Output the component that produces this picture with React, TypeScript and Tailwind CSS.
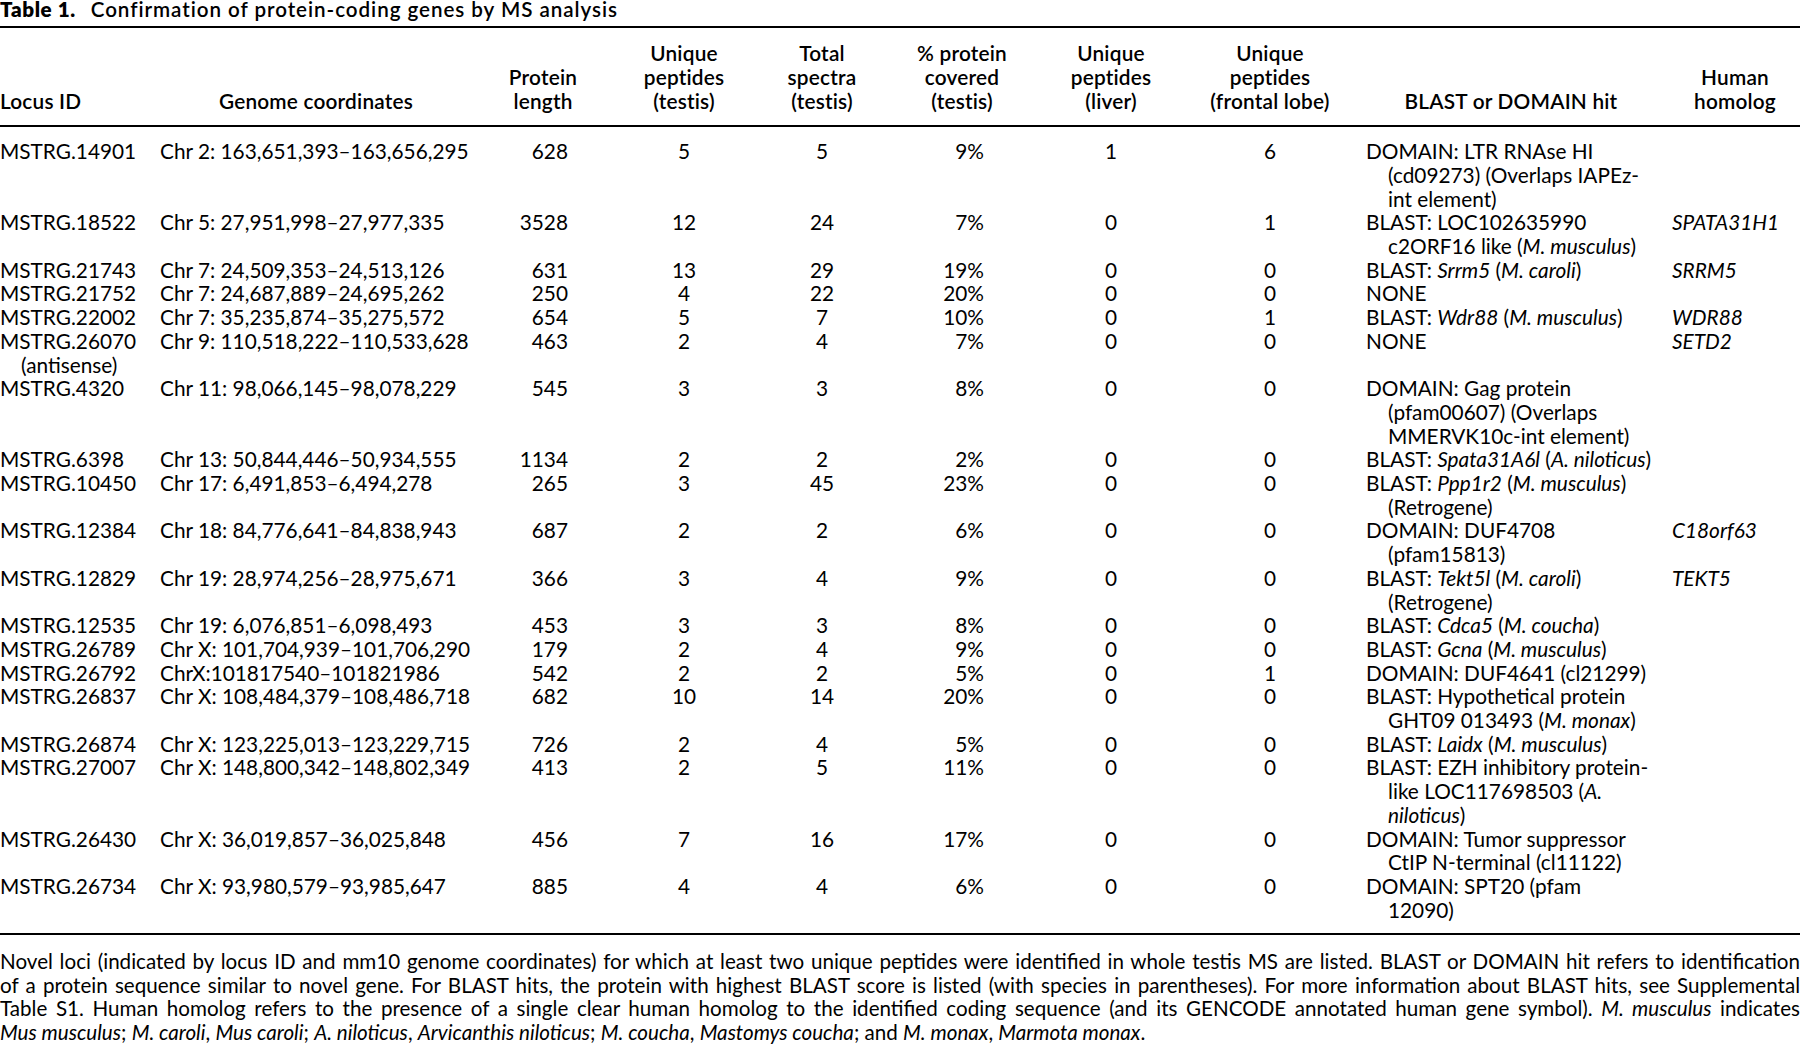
import React from "react";

const I = ({ children }: { children: React.ReactNode }) => <span className="italic">{children}</span>;

type Row = {
  id: React.ReactNode[];
  coord: string;
  len: string;
  up: string;
  ts: string;
  pc: string;
  liver: string;
  fl: string;
  hit: React.ReactNode[];
  hom?: React.ReactNode;
};

const rows: Row[] = [
  { id: ["MSTRG.14901"], coord: "Chr 2: 163,651,393–163,656,295", len: "628", up: "5", ts: "5", pc: "9%", liver: "1", fl: "6", hit: ["DOMAIN: LTR RNAse HI", "(cd09273) (Overlaps IAPEz-", "int element)"] },
  { id: ["MSTRG.18522"], coord: "Chr 5: 27,951,998–27,977,335", len: "3528", up: "12", ts: "24", pc: "7%", liver: "0", fl: "1", hit: ["BLAST: LOC102635990", <>c2ORF16 like (<I>M. musculus</I>)</>], hom: "SPATA31H1" },
  { id: ["MSTRG.21743"], coord: "Chr 7: 24,509,353–24,513,126", len: "631", up: "13", ts: "29", pc: "19%", liver: "0", fl: "0", hit: [<>BLAST: <I>Srrm5</I> (<I>M. caroli</I>)</>], hom: "SRRM5" },
  { id: ["MSTRG.21752"], coord: "Chr 7: 24,687,889–24,695,262", len: "250", up: "4", ts: "22", pc: "20%", liver: "0", fl: "0", hit: ["NONE"] },
  { id: ["MSTRG.22002"], coord: "Chr 7: 35,235,874–35,275,572", len: "654", up: "5", ts: "7", pc: "10%", liver: "0", fl: "1", hit: [<>BLAST: <I>Wdr88</I> (<I>M. musculus</I>)</>], hom: "WDR88" },
  { id: ["MSTRG.26070", "(antisense)"], coord: "Chr 9: 110,518,222–110,533,628", len: "463", up: "2", ts: "4", pc: "7%", liver: "0", fl: "0", hit: ["NONE"], hom: "SETD2" },
  { id: ["MSTRG.4320"], coord: "Chr 11: 98,066,145–98,078,229", len: "545", up: "3", ts: "3", pc: "8%", liver: "0", fl: "0", hit: ["DOMAIN: Gag protein", "(pfam00607) (Overlaps", "MMERVK10c-int element)"] },
  { id: ["MSTRG.6398"], coord: "Chr 13: 50,844,446–50,934,555", len: "1134", up: "2", ts: "2", pc: "2%", liver: "0", fl: "0", hit: [<>BLAST: <I>Spata31A6l</I> (<I>A. niloticus</I>)</>] },
  { id: ["MSTRG.10450"], coord: "Chr 17: 6,491,853–6,494,278", len: "265", up: "3", ts: "45", pc: "23%", liver: "0", fl: "0", hit: [<>BLAST: <I>Ppp1r2</I> (<I>M. musculus</I>)</>, "(Retrogene)"] },
  { id: ["MSTRG.12384"], coord: "Chr 18: 84,776,641–84,838,943", len: "687", up: "2", ts: "2", pc: "6%", liver: "0", fl: "0", hit: ["DOMAIN: DUF4708", "(pfam15813)"], hom: "C18orf63" },
  { id: ["MSTRG.12829"], coord: "Chr 19: 28,974,256–28,975,671", len: "366", up: "3", ts: "4", pc: "9%", liver: "0", fl: "0", hit: [<>BLAST: <I>Tekt5l</I> (<I>M. caroli</I>)</>, "(Retrogene)"], hom: "TEKT5" },
  { id: ["MSTRG.12535"], coord: "Chr 19: 6,076,851–6,098,493", len: "453", up: "3", ts: "3", pc: "8%", liver: "0", fl: "0", hit: [<>BLAST: <I>Cdca5</I> (<I>M. coucha</I>)</>] },
  { id: ["MSTRG.26789"], coord: "Chr X: 101,704,939–101,706,290", len: "179", up: "2", ts: "4", pc: "9%", liver: "0", fl: "0", hit: [<>BLAST: <I>Gcna</I> (<I>M. musculus</I>)</>] },
  { id: ["MSTRG.26792"], coord: "ChrX:101817540–101821986", len: "542", up: "2", ts: "2", pc: "5%", liver: "0", fl: "1", hit: ["DOMAIN: DUF4641 (cl21299)"] },
  { id: ["MSTRG.26837"], coord: "Chr X: 108,484,379–108,486,718", len: "682", up: "10", ts: "14", pc: "20%", liver: "0", fl: "0", hit: ["BLAST: Hypothetical protein", <>GHT09 013493 (<I>M. monax</I>)</>] },
  { id: ["MSTRG.26874"], coord: "Chr X: 123,225,013–123,229,715", len: "726", up: "2", ts: "4", pc: "5%", liver: "0", fl: "0", hit: [<>BLAST: <I>Laidx</I> (<I>M. musculus</I>)</>] },
  { id: ["MSTRG.27007"], coord: "Chr X: 148,800,342–148,802,349", len: "413", up: "2", ts: "5", pc: "11%", liver: "0", fl: "0", hit: ["BLAST: EZH inhibitory protein-", <>like LOC117698503 (<I>A.</I></>, <><I>niloticus</I>)</>] },
  { id: ["MSTRG.26430"], coord: "Chr X: 36,019,857–36,025,848", len: "456", up: "7", ts: "16", pc: "17%", liver: "0", fl: "0", hit: ["DOMAIN: Tumor suppressor", "CtIP N-terminal (cl11122)"] },
  { id: ["MSTRG.26734"], coord: "Chr X: 93,980,579–93,985,647", len: "885", up: "4", ts: "4", pc: "6%", liver: "0", fl: "0", hit: ["DOMAIN: SPT20 (pfam", "12090)"] },
];

const headers: { lines: string[]; cls: string }[] = [
  { lines: ["Locus ID"], cls: "text-left" },
  { lines: ["Genome coordinates"], cls: "text-center" },
  { lines: ["Protein", "length"], cls: "text-center" },
  { lines: ["Unique", "peptides", "(testis)"], cls: "text-center" },
  { lines: ["Total", "spectra", "(testis)"], cls: "text-center" },
  { lines: ["% protein", "covered", "(testis)"], cls: "text-center" },
  { lines: ["Unique", "peptides", "(liver)"], cls: "text-center" },
  { lines: ["Unique", "peptides", "(frontal lobe)"], cls: "text-center" },
  { lines: ["BLAST or DOMAIN hit"], cls: "text-center" },
  { lines: ["Human", "homolog"], cls: "text-center" },
];

const GRID = "grid grid-cols-[160px_312px_142px_140px_136px_144px_154px_164px_318px_130px]";

function Lines({ lines, indent }: { lines: React.ReactNode[]; indent: string }) {
  return (
    <>
      {lines.map((l, i) => (
        <div key={i} className={i > 0 ? indent : ""}>
          {l}
        </div>
      ))}
    </>
  );
}

const footLines: React.ReactNode[] = [
  "Novel loci (indicated by locus ID and mm10 genome coordinates) for which at least two unique peptides were identified in whole testis MS are listed. BLAST or DOMAIN hit refers to identification",
  "of a protein sequence similar to novel gene. For BLAST hits, the protein with highest BLAST score is listed (with species in parentheses). For more information about BLAST hits, see Supplemental",
  <>
    Table S1. Human homolog refers to the presence of a single clear human homolog to the identified coding sequence (and its GENCODE annotated human gene symbol). <I>M. musculus</I> indicates
  </>,
];

export default function App() {
  return (
    <div className="w-[1800px] h-[1045px] overflow-hidden bg-white text-black [font-family:Lato,sans-serif] text-[20.8px] leading-[23.7px]">
      <div className="border-b-2 border-black pt-[1.5px] pb-[9.7px] text-[20.6px] leading-[14.8px] tracking-[0.95px] whitespace-nowrap">
        <span className="font-extrabold tracking-[0.6px]">Table 1.</span>
        <span className="ml-[15px] font-semibold">Confirmation of protein-coding genes by MS analysis</span>
      </div>

      <div className={`${GRID} items-end border-b-2 border-black pt-[13px] pb-[12px] leading-[24px] font-semibold tracking-[0.2px] whitespace-nowrap`}>
        {headers.map((h, i) => (
          <div key={i} className={h.cls}>
            {h.lines.map((l, j) => (
              <div key={j}>{l}</div>
            ))}
          </div>
        ))}
      </div>

      <div className="border-b-2 border-black pt-[12.2px] pb-[11.5px] whitespace-nowrap">
        {rows.map((r, i) => (
          <div key={i} className={GRID}>
            <div>
              <Lines lines={r.id} indent="pl-[21px]" />
            </div>
            <div>{r.coord}</div>
            <div className="text-right pr-[46px]">{r.len}</div>
            <div className="text-center">{r.up}</div>
            <div className="text-center">{r.ts}</div>
            <div className="text-right pr-[50px]">{r.pc}</div>
            <div className="text-center">{r.liver}</div>
            <div className="text-center">{r.fl}</div>
            <div className="pl-[14px]">
              <Lines lines={r.hit} indent="pl-[22px]" />
            </div>
            <div className="pl-[2px] italic">{r.hom}</div>
          </div>
        ))}
      </div>

      <div className="pt-[15.2px] text-[20.6px] leading-[23.5px]">
        {footLines.map((l, i) => (
          <div key={i} className="text-justify [text-align-last:justify]">
            {l}
          </div>
        ))}
        <div>
          <I>Mus musculus</I>; <I>M. caroli</I>, <I>Mus caroli</I>; <I>A. niloticus</I>, <I>Arvicanthis niloticus</I>; <I>M. coucha</I>, <I>Mastomys coucha</I>; and <I>M. monax</I>, <I>Marmota monax</I>.
        </div>
      </div>
    </div>
  );
}
